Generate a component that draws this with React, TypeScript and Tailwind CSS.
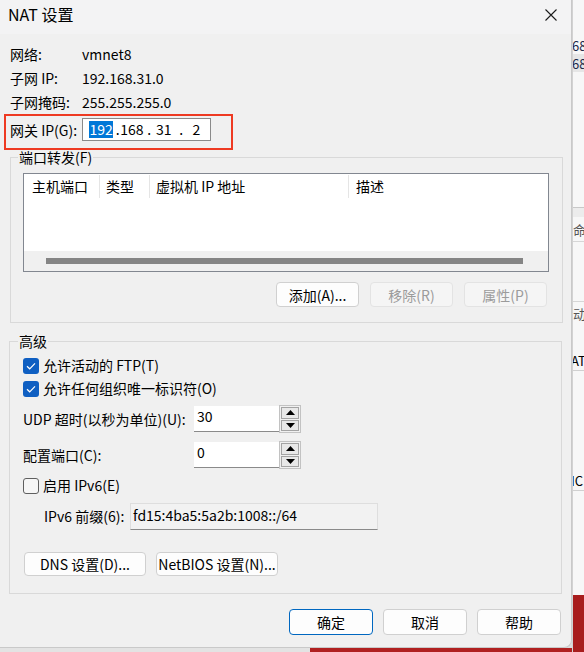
import React from "react";

function Check({ checked }: { checked: boolean }) {
  return checked ? (
    <div className="w-[16px] h-[16px] rounded-[3px] bg-[#0f5fc2] flex items-center justify-center shrink-0">
      <svg width="10" height="8" viewBox="0 0 10 8">
        <path d="M1 4.2 L3.7 6.8 L9 1.3" fill="none" stroke="white" strokeWidth="1.2" />
      </svg>
    </div>
  ) : (
    <div className="w-[16px] h-[16px] rounded-[3px] border border-[#5f5f5f] bg-[#f6f6f6] shrink-0" />
  );
}

function Arrow({ up }: { up: boolean }) {
  return (
    <div className="flex-1 border border-[#a3a3a3] bg-[#e8e8e8] flex items-center justify-center">
      <svg width="9" height="5" viewBox="0 0 9 5">
        <path d={up ? "M0 5 L4.5 0 L9 5Z" : "M0 0 L4.5 5 L9 0Z"} fill="#000" />
      </svg>
    </div>
  );
}

function SpinInput({ value }: { value: string }) {
  return (
    <div className="flex items-center">
      <div className="w-[85px] h-[26px] bg-white border-b border-[#8a8a8a] pl-[3px] pt-[1px] leading-[18px]">{value}</div>
      <div className="w-[22px] h-[28px] border border-[#c2c2c2] flex flex-col p-[1px] gap-[1px] bg-[#f0f0f0]">
        <Arrow up={true} />
        <Arrow up={false} />
      </div>
    </div>
  );
}

function Btn({ label, cls, disabled, primary }: { label: string; cls: string; disabled?: boolean; primary?: boolean }) {
  const base = "flex items-center justify-center rounded-[4px] leading-none ";
  const look = disabled
    ? "bg-[#f5f5f5] border border-[#e3e3e3] text-[#9b9b9b]"
    : primary
    ? "bg-[#fdfdfd] border border-[#0067c0] text-black"
    : "bg-[#fdfdfd] border border-[#d0d0d0] text-black";
  return <div className={base + look + " " + cls}>{label}</div>;
}

export default function App() {
  return (
    <div className="w-[584px] h-[652px] overflow-hidden flex bg-[#dcdcdc] font-['Noto_Sans_CJK_SC',sans-serif] text-[14px] text-black">
      {/* dialog column */}
      <div className="w-[572px] h-[652px] flex flex-col shrink-0">
        <div className="w-[572px] h-[648px] flex flex-col bg-[#f0f0f0] border-r border-b border-[#c9c9c9] rounded-br-[8px] overflow-hidden">
          {/* title bar */}
          <div className="h-[34px] bg-[#f3f3f4] flex items-center justify-between shrink-0">
            <div className="pl-[8px] text-[16px] leading-none pb-[6px]">NAT 设置</div>
            <div className="w-[40px] h-[34px] flex items-center justify-center pb-[4px]">
              <svg width="12" height="12" viewBox="0 0 12 12">
                <path d="M0.5 0.5 L11.5 11.5 M11.5 0.5 L0.5 11.5" stroke="#1a1a1a" strokeWidth="1.1" />
              </svg>
            </div>
          </div>

          {/* body */}
          <div className="relative flex-1 flex flex-col pt-[8px]">
            <div className="flex flex-col px-[10px]">
              <div className="h-[24px] flex items-center">
                <div className="w-[72px]">网络:</div>
                <div>vmnet8</div>
              </div>
              <div className="h-[24px] flex items-center">
                <div className="w-[72px]">子网 IP:</div>
                <div>192.168.31.0</div>
              </div>
              <div className="h-[24px] flex items-center">
                <div className="w-[72px]">子网掩码:</div>
                <div>255.255.255.0</div>
              </div>
              <div className="h-[27px] pt-[4px] flex items-start">
                <div className="w-[72px] h-[23px] flex items-center pt-[2px]">网关 IP(G):</div>
                <div className="w-[129px] h-[23px] bg-white border border-[#8a8a8a] flex items-center pl-[6px] leading-[17px]">
                  <span className="bg-[#0078d7] text-white px-[0.5px]">192</span>
                  <span className="w-[9px] flex justify-center">.</span>
                  <span className="w-[19px] flex justify-center">168</span>
                  <span className="w-[16px] flex justify-center">.</span>
                  <span className="w-[13px] flex justify-center">31</span>
                  <span className="w-[22px] flex justify-center">.</span>
                  <span className="w-[8px] flex justify-center">2</span>
                </div>
              </div>
            </div>

            {/* Port forwarding group */}
            <fieldset className="ml-[10px] mt-[7px] w-[553px] border border-[#d9d9d9] pb-[15px]">
              <legend className="ml-[7px] px-[1px] leading-[18px]">端口转发(F)</legend>
              <div className="ml-[12px] mt-[7px] w-[526px] h-[99px] border border-[#828790] bg-white flex flex-col">
                <div className="h-[25px] flex items-center shrink-0">
                  <div className="w-[76px] h-[23px] pl-[8px] flex items-center border-r border-[#e5e5e5]">主机端口</div>
                  <div className="w-[50px] h-[23px] pl-[6px] flex items-center border-r border-[#e5e5e5]">类型</div>
                  <div className="w-[199px] h-[23px] pl-[6px] flex items-center border-r border-[#e5e5e5]">虚拟机 IP 地址</div>
                  <div className="pl-[7px] flex items-center">描述</div>
                </div>
                <div className="flex-1" />
                <div className="h-[20px] bg-[#f0f0f0] flex items-center shrink-0">
                  <div className="ml-[22px] w-[477px] h-[6px] bg-[#858585]" />
                </div>
              </div>
              <div className="mt-[10px] w-[526px] ml-[12px] pr-[2px] flex justify-end gap-[11px]">
                <Btn label="添加(A)..." cls="w-[83px] h-[25px]" />
                <Btn label="移除(R)" cls="w-[83px] h-[25px]" disabled />
                <Btn label="属性(P)" cls="w-[83px] h-[25px]" disabled />
              </div>
            </fieldset>

            {/* Advanced group */}
            <fieldset className="ml-[9px] mt-[9px] w-[553px] border border-[#d9d9d9] pl-[13px] pb-[17px]">
              <legend className="ml-[-5px] px-[1px] leading-[18px]">高级</legend>
              <div className="pt-[4px] flex flex-col">
                <div className="h-[23px] flex items-center gap-[4px]">
                  <Check checked={true} />
                  <span>允许活动的 FTP(T)</span>
                </div>
                <div className="h-[23px] flex items-center gap-[4px]">
                  <Check checked={true} />
                  <span>允许任何组织唯一标识符(O)</span>
                </div>
                <div className="mt-[5px] flex items-center">
                  <div className="w-[171px]">UDP 超时(以秒为单位)(U):</div>
                  <SpinInput value="30" />
                </div>
                <div className="mt-[8px] flex items-center">
                  <div className="w-[171px]">配置端口(C):</div>
                  <SpinInput value="0" />
                </div>
                <div className="mt-[5px] h-[23px] flex items-center gap-[4px]">
                  <Check checked={false} />
                  <span>启用 IPv6(E)</span>
                </div>
                <div className="mt-[6px] flex items-center pl-[21px]">
                  <div className="w-[86px]">IPv6 前缀(6):</div>
                  <div className="w-[248px] h-[27px] bg-[#f2f2f2] border border-[#dedede] border-b-[#8a8a8a] pl-[2px] pt-[1px] leading-[20px]">
                    fd15:4ba5:5a2b:1008::/64
                  </div>
                </div>
                <div className="mt-[22px] ml-[1px] flex gap-[10px]">
                  <Btn label="DNS 设置(D)..." cls="w-[122px] h-[24px]" />
                  <Btn label="NetBIOS 设置(N)..." cls="w-[122px] h-[24px]" />
                </div>
              </div>
            </fieldset>

            {/* bottom buttons */}
            <div className="mt-[15px] pr-[10px] flex justify-end gap-[10px]">
              <Btn label="确定" cls="w-[84px] h-[26px]" primary />
              <Btn label="取消" cls="w-[84px] h-[26px]" />
              <Btn label="帮助" cls="w-[84px] h-[26px]" />
            </div>

            {/* annotation overlay */}
            <div className="absolute left-[4px] top-[80px] w-[229px] h-[36px] border-2 border-[#ee3a22] pointer-events-none" />
          </div>
        </div>
        <div className="flex-1 flex">
          <div className="w-[310px] bg-[#e3e3e3]" />
          <div className="flex-1 bg-[#b02020]" />
        </div>
      </div>

      {/* background window strip */}
      <div className="flex-1 flex flex-col bg-[#f7f7f7] border-l border-[#d2d2d2] text-[13px] leading-none overflow-hidden">
        <div className="h-[36px]" />
        <div className="h-[18px] flex items-center text-[#1b2a4a] -ml-[1px]">68</div>
        <div className="h-[18px] flex items-center text-[#1b2a4a] bg-[#e6e6e6] -ml-[1px]">68</div>
        <div className="h-[135px]" />
        <div className="h-[10px] border-t border-[#c8c8c8] bg-[#ececec]" />
        <div className="h-[24px] flex items-center text-[#555]">命</div>
        <div className="h-[60px] border-t border-[#d6d6d6]" />
        <div className="h-[24px] flex items-center text-[#555] border-t border-[#d6d6d6]">动</div>
        <div className="h-[25px]" />
        <div className="h-[20px] flex items-center -ml-[2px]">AT</div>
        <div className="h-[100px] border-t border-[#d0d0d0]" />
        <div className="h-[20px] flex items-center -ml-[2px]">IC</div>
        <div className="h-[105px] border-t border-[#d0d0d0]" />
        <div className="flex-1 bg-[#a81d1d]" />
      </div>
    </div>
  );
}
